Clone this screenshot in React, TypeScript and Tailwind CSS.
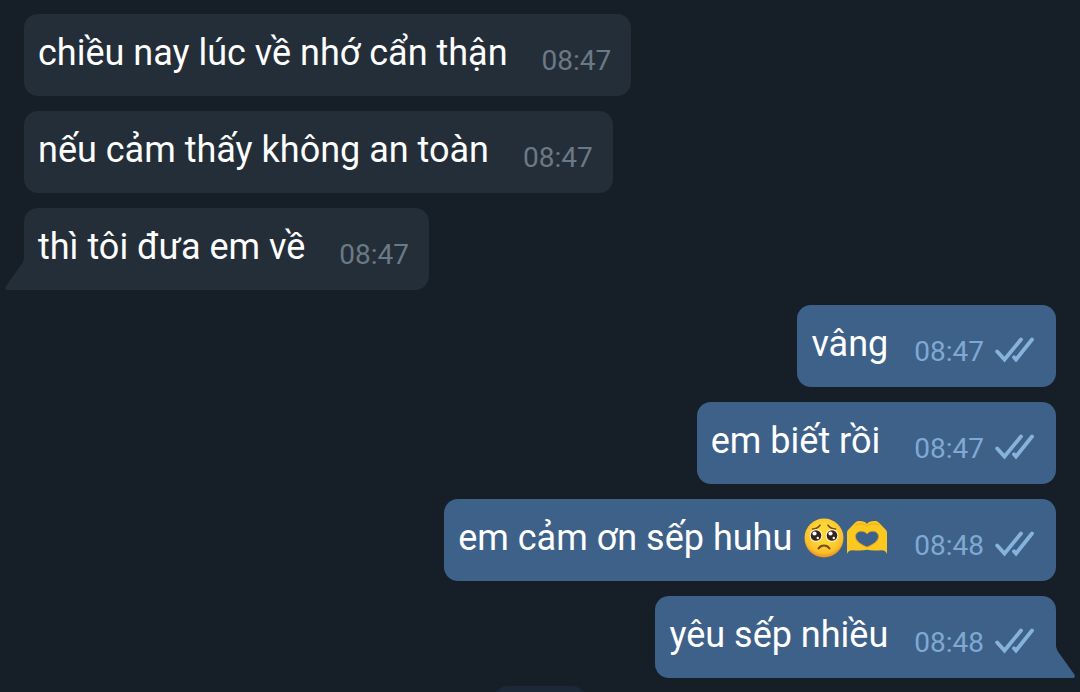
import * as React from "react";
import { clsx } from "clsx";

type Message = {
  id: number;
  text: string;
  time: string;
  outgoing?: boolean;
  emoji?: boolean;
  tail?: boolean;
  spaced?: boolean;
};

const messages: Message[] = [
  { id: 1, text: "chiều nay lúc về nhớ cẩn thận", time: "08:47", spaced: true },
  { id: 2, text: "nếu cảm thấy không an toàn", time: "08:47", spaced: true },
  { id: 3, text: "thì tôi đưa em về", time: "08:47", spaced: true, tail: true },
  { id: 4, text: "vâng", time: "08:47", outgoing: true },
  { id: 5, text: "em biết rồi", time: "08:47", outgoing: true, spaced: true },
  { id: 6, text: "em cảm ơn sếp huhu", time: "08:48", outgoing: true, emoji: true },
  { id: 7, text: "yêu sếp nhiều", time: "08:48", outgoing: true, tail: true },
];

function ReadChecks() {
  return (
    <svg
      role="img"
      aria-label="Read"
      viewBox="0 0 40 28"
      className="mb-1.5 ml-2.5 h-7 w-10 shrink-0"
      fill="none"
      stroke="#86b2dc"
      strokeWidth="3.8"
      strokeLinecap="round"
    >
      <path d="M3.2 15.5 10.5 23.5 27 3.5" />
      <path d="M20 21.3 22 23.5 38 3.5" />
    </svg>
  );
}

function PleadingFace() {
  return (
    <svg role="img" aria-label="Pleading face" viewBox="0 0 40 40" className="size-10 shrink-0">
      <defs>
        <radialGradient id="face" cx="0.5" cy="0.4" r="0.6">
          <stop offset="0.4" stopColor="#fdd835" />
          <stop offset="0.8" stopColor="#fbc02d" />
          <stop offset="1" stopColor="#e8901a" />
        </radialGradient>
      </defs>
      <circle cx="20" cy="20" r="19.5" fill="url(#face)" />
      <g fill="none" stroke="#7a4a17" strokeWidth="1.6" strokeLinecap="round">
        <path d="M8.5 11c3.2-.2 5.7-1.4 7.5-3.800" />
        <path d="M31.5 11c-3.200-.2-5.700-1.400-7.500-3.800" />
        <path d="M14.5 30.5c2.600-4 8.400-4 11 0" strokeWidth="2" />
      </g>
      {[12, 28].map((cx) => (
        <g key={cx}>
          <circle cx={cx} cy="17.5" r="6.3" fill="#fff6dc" />
          <circle cx={cx} cy="17.5" r="5.3" fill="#36231d" />
          <circle cx={cx - 1.5} cy="15.5" r="2.1" fill="#fff" />
          <circle cx={cx + 1.8} cy="20" r="1.2" fill="#fff" />
        </g>
      ))}
    </svg>
  );
}

function HeartHands() {
  return (
    <svg role="img" aria-label="Heart hands" viewBox="0 0 42 40" className="h-10 w-[42px] shrink-0">
      <path
        d="M1 36V15C1 13.500 1.500 12.500 2.500 11.500L9 4.800C10.500 3.300 12 3 14 3.100 17 3.200 19.500 4 21 6c1.500-2 4-2.800 7-2.900 2-.1 3.500.2 5 1.700l6.500 6.700c1 1 1.500 2 1.500 3.500V36c-1-2.600-2.500-3.800-5-3.800-5 .2-10 .8-15-.4-5 1.200-10 .6-15 .4-2.500 0-4 1.200-5 3.800Z"
        fill="#fbc822"
      />
      <path
        d="M9.500 7C14 5 18.500 5.500 21 8.500 23.500 5.500 28 5 32.500 7"
        fill="none"
        stroke="#eeab18"
        strokeWidth="1"
        strokeLinecap="round"
      />
      <path
        d="M21 29C16 27 9.500 23.500 9.500 18.500c0-6 8.500-7 11.500-2.500 3-4.500 11.500-3.500 11.500 2.500C32.500 23.500 26 27 21 29Z"
        fill="#3e6189"
        stroke="#d99e1c"
        strokeWidth="0.8"
      />
    </svg>
  );
}

function Tail({ outgoing }: { outgoing?: boolean }) {
  return (
    <svg
      aria-hidden
      viewBox="0 0 20 32"
      className={clsx(
        "absolute bottom-0 h-8 w-5",
        outgoing ? "left-full -scale-x-100 fill-[#3e6189]" : "right-full fill-[#232e39]",
      )}
    >
      <path d="M20 0C19.5 3 18.5 5 17 7L2 28C.5 30 1 32 3.5 32H20Z" />
    </svg>
  );
}

function Bubble({ message }: { message: Message }) {
  const { text, time, outgoing, emoji, tail, spaced } = message;
  return (
    <li
      className={clsx(
        "relative flex max-w-full items-end rounded-[14px] py-[17px] pl-3.5",
        outgoing ? "self-end bg-[#3e6189] pr-[22px]" : "self-start bg-[#232e39] pr-5",
        tail && (outgoing ? "rounded-br-none" : "rounded-bl-none"),
      )}
    >
      <p className="mb-1 flex items-center text-[36px] leading-11 text-white">
        {text}
        {emoji && (
          <span className="ml-3 flex items-center gap-0.5">
            <PleadingFace />
            <HeartHands />
          </span>
        )}
      </p>
      <time
        className={clsx(
          "text-[28px] leading-9",
          spaced ? "ml-[34px]" : "ml-[26px]",
          outgoing ? "text-[#7fa9d3]" : "text-[#6b7986]",
        )}
      >
        {time}
      </time>
      {outgoing && <ReadChecks />}
      {tail && <Tail outgoing={outgoing} />}
    </li>
  );
}

export default function App() {
  return (
    <main className="flex h-screen flex-col overflow-hidden bg-[#161e27] pt-3.5 font-['Roboto','Noto_Sans',sans-serif]">
      <ul className="flex shrink-0 flex-col gap-[15px] px-6">
        {messages.map((message) => (
          <Bubble key={message.id} message={message} />
        ))}
      </ul>
      <div aria-hidden className="mt-2 h-10 w-24 shrink-0 self-center rounded-2xl bg-[#1c2738]" />
    </main>
  );
}
